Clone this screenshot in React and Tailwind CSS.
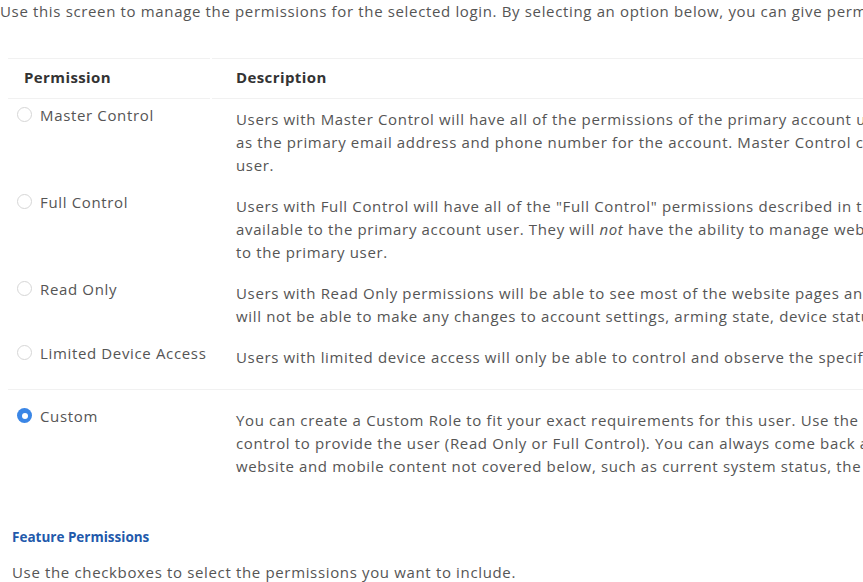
import React from 'react';

const rows = [
  {
    label: 'Master Control',
    lines: [
      'Users with Master Control will have all of the permissions of the primary account user except for managing items such',
      'as the primary email address and phone number for the account. Master Control can only be granted by the primary',
      'user.',
    ],
  },
  {
    label: 'Full Control',
    lines: [
      'Users with Full Control will have all of the "Full Control" permissions described in the table below, as well as other features',
      <>available to the primary account user. They will <em>not</em> have the ability to manage website logins, which is reserved</>,
      'to the primary user.',
    ],
  },
  {
    label: 'Read Only',
    lines: [
      'Users with Read Only permissions will be able to see most of the website pages and information, but they',
      'will not be able to make any changes to account settings, arming state, device status, etc.',
    ],
  },
  {
    label: 'Limited Device Access',
    lines: [
      'Users with limited device access will only be able to control and observe the specific devices selected below.',
    ],
    last: true,
  },
];

const custom = {
  label: 'Custom',
  lines: [
    'You can create a Custom Role to fit your exact requirements for this user. Use the table below to choose the level of',
    'control to provide the user (Read Only or Full Control). You can always come back and edit this later. All other',
    'website and mobile content not covered below, such as current system status, the activity log and more, will be available.',
  ],
};

function Radio({ checked }) {
  if (checked) {
    return (
      <span className="w-[15px] h-[15px] rounded-full bg-[#3a86e6] flex items-center justify-center shrink-0 mt-[3px]">
        <span className="w-[6px] h-[6px] rounded-full bg-white" />
      </span>
    );
  }
  return <span className="w-[15px] h-[15px] rounded-full border border-[#d6d6d6] bg-white shrink-0 mt-[3px]" />;
}

function Row({ row, checked, labelPad, descPad, bottomPad, border }) {
  return (
    <div className={`flex gap-[2px] ${border ? 'border-b border-[#f1f1f1]' : ''}`}>
      <div className={`w-[202px] shrink-0 flex gap-[8px] pl-[9px] ${labelPad}`}>
        <Radio checked={checked} />
        <span className="whitespace-nowrap">{row.label}</span>
      </div>
      <div className={`pl-6 ${descPad} ${bottomPad}`}>
        {row.lines.map((l, i) => (
          <div key={i} className="whitespace-nowrap">{l}</div>
        ))}
      </div>
    </div>
  );
}

export default function App() {
  return (
    <div
      className="w-[863px] h-[582px] overflow-hidden bg-white text-[#555] text-[15px] leading-[23px] tracking-[0.65px]"
      style={{ fontFamily: '"Open Sans", "Liberation Sans", sans-serif' }}
    >
      <p className="whitespace-nowrap">
        Use this screen to manage the permissions for the selected login. By selecting an option below, you can give permissions to this user for the website and mobile app.
      </p>

      <div className="ml-[8px] mt-[35px] w-[1500px]">
        <div className="flex gap-[2px] font-bold text-[#333] tracking-[0.4px]">
          <div className="w-[202px] shrink-0 border-y border-[#f1f1f1] h-[41px] flex items-center pl-4 pb-[2px]">Permission</div>
          <div className="flex-1 border-y border-[#f1f1f1] h-[41px] flex items-center pl-6 pb-[2px]">Description</div>
        </div>

        {rows.map((r) => (
          <Row
            key={r.label}
            row={r}
            labelPad="pt-[5px]"
            descPad="pt-[9px]"
            bottomPad={r.last ? 'pb-[20px]' : 'pb-[9px]'}
            border={r.last}
          />
        ))}

        <Row row={custom} checked labelPad="pt-[15px]" descPad="pt-[19px]" bottomPad="pb-[9px]" />
      </div>

      <div className="pl-[12px] mt-[40px]">
        <h3 className="text-[13.5px] leading-[20px] font-bold text-[#2259ab] tracking-normal">Feature Permissions</h3>
        <p className="mt-[14px] whitespace-nowrap">Use the checkboxes to select the permissions you want to include.</p>
      </div>
    </div>
  );
}
